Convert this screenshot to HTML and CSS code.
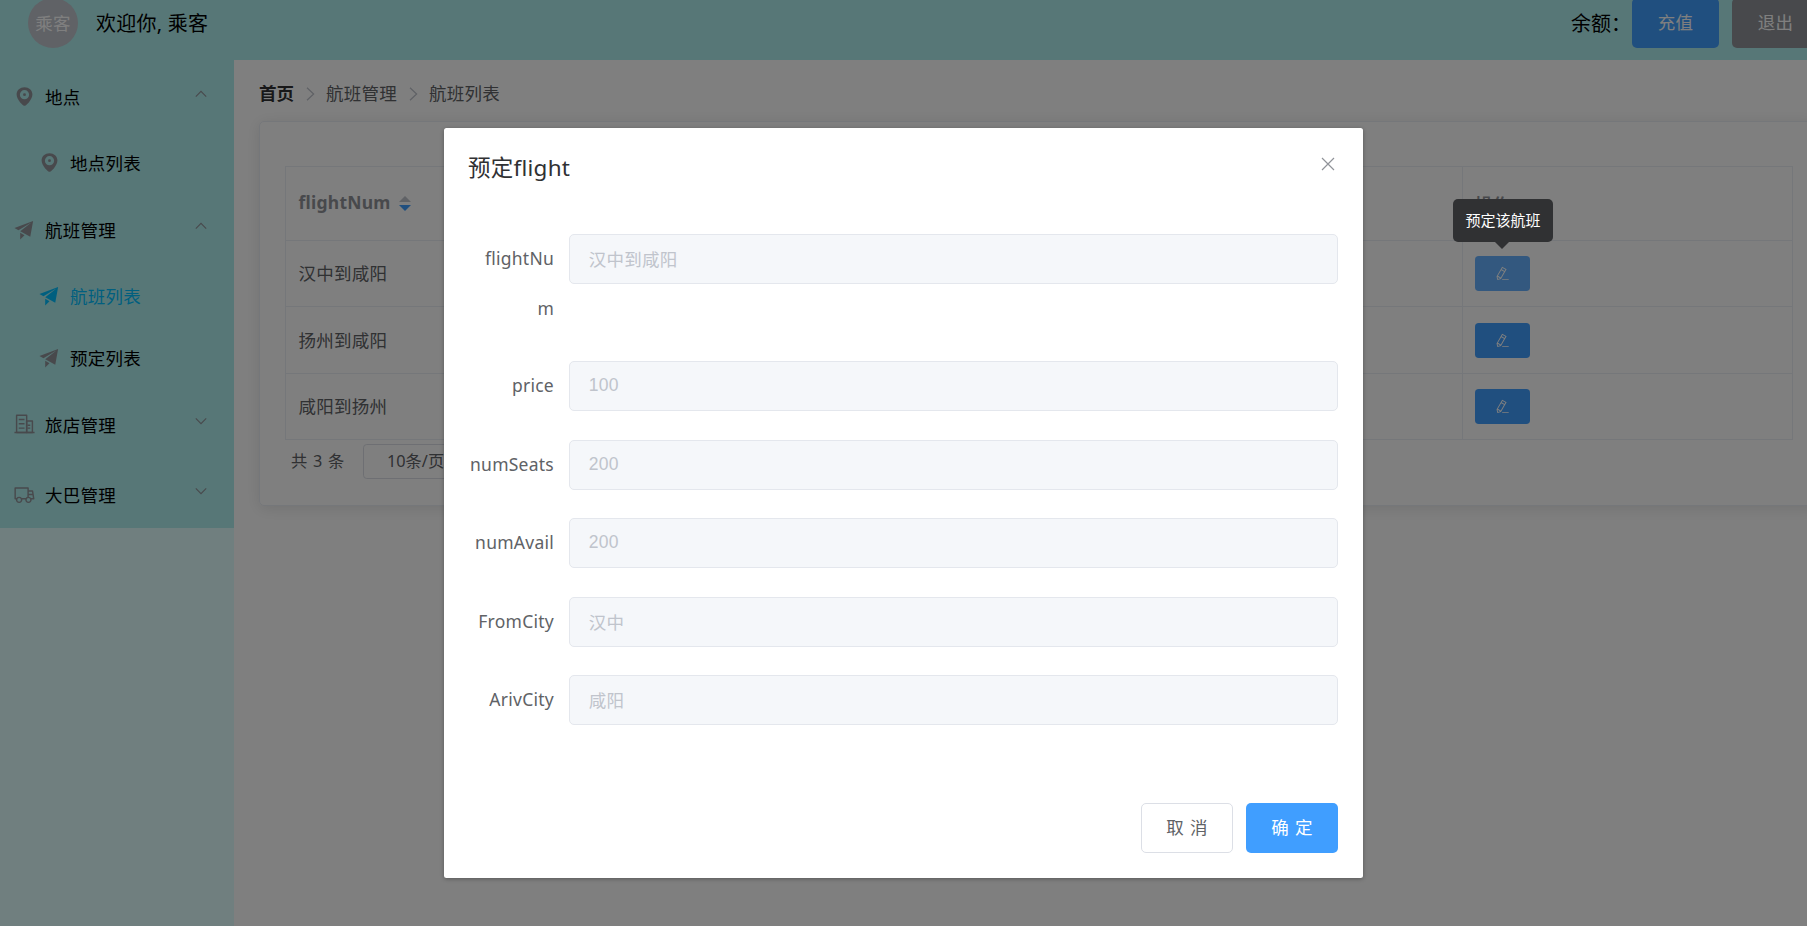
FILE: index.html
```html
<!DOCTYPE html>
<html lang="zh-CN">
<head>
<meta charset="utf-8">
<title>航班列表</title>
<link rel="stylesheet" href="styles.css">
</head>
<body>
<svg class="defs" aria-hidden="true">
  <symbol id="location" viewBox="0 0 1024 1024"><path d="M512 928c23.936 0 117.504-68.352 192.064-153.152C803.456 661.888 864 535.808 864 416c0-189.632-155.84-320-352-320S160 226.368 160 416c0 120.32 60.544 246.4 159.936 359.232C394.432 859.84 488 928 512 928zm0-435.2a64 64 0 1 0 0-128 64 64 0 0 0 0 128zm0 140.8a204.8 204.8 0 1 1 0-409.6 204.8 204.8 0 0 1 0 409.6z"/></symbol>
  <symbol id="promotion" viewBox="0 0 1024 1024"><path d="m64 448 832-320-128 704-446.08-243.328L832 192 242.816 545.536 64 448zm256 512V657.024L512 768 320 960z"/></symbol>
  <symbol id="building" viewBox="0 0 1024 1024"><path d="M192 128v704h384V128H192zm-32-64h448a32 32 0 0 1 32 32v768a32 32 0 0 1-32 32H160a32 32 0 0 1-32-32V96a32 32 0 0 1 32-32z"/><path d="M256 256h256v64H256v-64zm0 192h256v64H256v-64zm0 192h256v64H256v-64zm384-128h128v64H640v-64zm0 128h128v64H640v-64zM64 832h896v64H64v-64z"/><path d="M640 384v448h192V384H640zm-32-64h256a32 32 0 0 1 32 32v512a32 32 0 0 1-32 32H608a32 32 0 0 1-32-32V352a32 32 0 0 1 32-32z"/></symbol>
  <symbol id="truck" viewBox="0 0 1024 1024"><path d="M128.896 736H96a32 32 0 0 1-32-32V224a32 32 0 0 1 32-32h576a32 32 0 0 1 32 32v96h164.544a32 32 0 0 1 31.616 27.136l54.144 352A32 32 0 0 1 922.688 736h-91.52a144 144 0 1 1-286.272 0H415.104a144 144 0 1 1-286.272 0zm23.36-64a143.872 143.872 0 0 1 239.488 0H568.32c17.088-25.6 42.24-45.376 71.744-55.808V256H128v416h24.256zm655.488 0h77.632l-19.648-128H704v64.896A144 144 0 0 1 807.744 672zm48.128-192-14.72-96H704v96h151.872zM688 832a80 80 0 1 0 0-160 80 80 0 0 0 0 160zm-416 0a80 80 0 1 0 0-160 80 80 0 0 0 0 160z"/></symbol>
  <symbol id="edit" viewBox="0 0 1024 1024"><path d="m199.04 672.64 193.984 112 224-387.968-193.92-112-224 388.032zm-23.872 60.16 32.896 148.288 144.896-45.696L175.168 732.8zM455.04 229.248l193.92 112 56.704-98.112-193.984-112-56.64 98.112zM104.32 708.8l384-665.024 304.768 175.936L409.152 884.8h.064l-248.448 78.336L104.32 708.8zm384 254.272v-64h448v64h-448z"/></symbol>
  <symbol id="up" viewBox="0 0 12 12"><path d="M.8 8.6 6 3.4l5.2 5.2" fill="none" stroke="currentColor" stroke-width="1.1"/></symbol>
  <symbol id="down" viewBox="0 0 12 12"><path d="M.8 3.4 6 8.6l5.2-5.2" fill="none" stroke="currentColor" stroke-width="1.1"/></symbol>
  <symbol id="right" viewBox="0 0 9 14"><path d="M1 .8 7.6 7 1 13.2" fill="none" stroke="currentColor" stroke-width="1.3"/></symbol>
</svg>

<div class="app">
  <header class="header">
    <span class="avatar">乘客</span>
    <span class="welcome">欢迎你, 乘客</span>
    <span class="balance">余额：</span>
    <button class="btn btn-primary">充值</button>
    <button class="btn btn-info">退出</button>
  </header>
  <div class="body">
    <aside class="aside">
      <nav class="menu">
        <div class="item title"><svg class="ico"><use href="#location"/></svg><span>地点</span><svg class="arrow"><use href="#up"/></svg></div>
        <div class="item sub"><svg class="ico"><use href="#location"/></svg><span>地点列表</span></div>
        <div class="item title"><svg class="ico"><use href="#promotion"/></svg><span>航班管理</span><svg class="arrow"><use href="#up"/></svg></div>
        <div class="item sub active"><svg class="ico"><use href="#promotion"/></svg><span>航班列表</span></div>
        <div class="item sub"><svg class="ico"><use href="#promotion"/></svg><span>预定列表</span></div>
        <div class="item title"><svg class="ico"><use href="#building"/></svg><span>旅店管理</span><svg class="arrow"><use href="#down"/></svg></div>
        <div class="item title"><svg class="ico"><use href="#truck"/></svg><span>大巴管理</span><svg class="arrow"><use href="#down"/></svg></div>
      </nav>
    </aside>
    <main class="main">
      <div class="crumbs">
        <b>首页</b><svg class="sep"><use href="#right"/></svg><span>航班管理</span><svg class="sep"><use href="#right"/></svg><span>航班列表</span>
      </div>
      <section class="card">
        <div class="table">
          <div class="row head">
            <div class="cell">flightNum<span class="sort"><i class="asc"></i><i class="desc"></i></span></div>
            <div class="cell">操作</div>
          </div>
          <div class="row"><div class="cell">汉中到咸阳</div><div class="cell"><button class="edit hover"><svg><use href="#edit"/></svg></button></div></div>
          <div class="row"><div class="cell">扬州到咸阳</div><div class="cell"><button class="edit"><svg><use href="#edit"/></svg></button></div></div>
          <div class="row"><div class="cell">咸阳到扬州</div><div class="cell"><button class="edit"><svg><use href="#edit"/></svg></button></div></div>
        </div>
        <div class="pager"><span class="total">共 3 条</span><span class="size">10条/页</span></div>
      </section>
    </main>
  </div>
</div>

<div class="mask">
  <div class="dialog" role="dialog">
    <div class="dialog-head">
      <h2>预定flight</h2>
      <svg class="close" viewBox="0 0 14 14"><path d="M1 1l12 12M13 1L1 13"/></svg>
    </div>
    <form class="form">
      <div class="field tall"><label>flightNu<br>m</label><input disabled value="汉中到咸阳"></div>
      <div class="field"><label>price</label><input disabled value="100"></div>
      <div class="field"><label>numSeats</label><input disabled value="200"></div>
      <div class="field"><label>numAvail</label><input disabled value="200"></div>
      <div class="field"><label>FromCity</label><input disabled value="汉中"></div>
      <div class="field"><label>ArivCity</label><input disabled value="咸阳"></div>
    </form>
    <div class="dialog-foot">
      <button class="btn btn-plain">取 消</button>
      <button class="btn btn-primary">确 定</button>
    </div>
  </div>
</div>
<div class="tooltip">预定该航班</div>
</body>
</html>
```
FILE: styles.css
```css
* { box-sizing: border-box; }
body {
  margin: 0;
  height: 926px;
  overflow: hidden;
  background: #fff;
  color: #606266;
  font-family: "Noto Sans", "Noto Sans CJK SC", sans-serif;
  font-size: 17.5px;
  letter-spacing: .25px;
}
button, input { font: inherit; letter-spacing: inherit; }
.defs { position: absolute; width: 0; height: 0; }
.app { width: 1832px; height: 926px; overflow: hidden; }

.header {
  height: 60px;
  padding: 0 13px 14px 28px;
  display: flex;
  align-items: center;
  background: #afeeee;
  color: #000;
  font-size: 20px;
}
.avatar {
  width: 50px;
  height: 50px;
  flex: none;
  border-radius: 50%;
  background: #c0c4cc;
  color: #fff;
  font-size: 17.5px;
  line-height: 50px;
  text-align: center;
}
.welcome { margin-left: 18px; padding-top: 2px; line-height: 28px; }
.balance { margin-left: auto; width: 61px; padding-top: 2px; white-space: nowrap; line-height: 28px; letter-spacing: 0; }
.btn {
  height: 50px;
  padding: 0 0 3px;
  border: 1px solid transparent;
  border-radius: 5px;
  color: #fff;
  font-size: 17.5px;
  line-height: 44px;
}
.header .btn { width: 87px; flex: none; }
.header .btn + .btn { margin-left: 13px; }
.btn-primary { background: #409eff; }
.btn-info { background: #909399; }
.btn-plain { background: #fff; border-color: #dcdfe6; color: #606266; }

.body { display: flex; height: 866px; }
.aside { width: 233.75px; flex: none; background: #e0ffff; }
.menu { background: #afeeee; color: #000; }
.item { height: 62.5px; padding: 3px 27px 0 12.5px; display: flex; align-items: center; }
.title { height: 70px; }
.sub { padding-left: 37.5px; }
.ico { width: 23px; height: 23px; flex: none; fill: #909399; margin-right: 9.5px; }
.arrow { width: 12px; height: 12px; margin-left: auto; margin-bottom: 6px; color: #909399; }
.active { color: #00bfff; }
.active .ico { fill: #00bfff; }

.main { flex: 1; padding: 25px 14px 0 25.25px; }
.crumbs { height: 17.5px; display: flex; align-items: center; line-height: 17.5px; }
.crumbs b { color: #303133; letter-spacing: 0; }
.sep { width: 9px; height: 14px; margin: 0 11px 0 12px; color: #c0c4cc; }
.card {
  height: 385px;
  margin-top: 18.5px;
  padding: 44px 25px 0 25px;
  border: 1px solid #ebeef5;
  border-radius: 5px;
  box-shadow: 0 2.5px 15px rgba(0, 0, 0, .1);
}
.table { width: 1508px; border: 1px solid #ebeef5; border-bottom: 0; }
.row { display: grid; grid-template-columns: 1176px 1fr; height: 66.4px; border-bottom: 1px solid #ebeef5; }
.head { height: 74px; font-weight: 700; color: #909399; }
.cell { padding: 0 0 2px 12.5px; display: flex; align-items: center; }
.head .cell { padding-bottom: 3px; }
.cell + .cell { padding-left: 12px; padding-bottom: 0; border-left: 1px solid #ebeef5; }
.sort { display: grid; gap: 3px; margin: 2px 0 0 8px; }
.asc, .desc { border: 6px solid transparent; width: 0; height: 0; }
.asc { border-top: 0; border-bottom-color: #c0c4cc; }
.desc { border-bottom: 0; border-top-color: #409eff; }
.edit {
  width: 55px;
  height: 35px;
  padding: 0;
  border: 0;
  border-radius: 3.75px;
  background: #409eff;
  display: grid;
  place-items: center;
}
.edit svg { width: 15px; height: 15px; fill: #fff; }
.hover { background: #66b1ff; }
.pager { display: flex; align-items: center; margin-top: 4px; padding-left: 6px; font-size: 16.25px; }
.total { padding-bottom: 3px; word-spacing: 1px; }
.size {
  width: 137px;
  height: 35px;
  margin-left: 18px;
  padding-left: 23.5px;
  border: 1px solid #dcdfe6;
  border-radius: 3.75px;
  line-height: 32px;
  letter-spacing: 0;
}

/* Modal layer */
.mask { position: absolute; inset: 0; padding-top: 128px; background: rgba(0, 0, 0, .5); }
.dialog {
  width: 919px;
  height: 750px;
  margin: 0 auto;
  padding: 0 25px 25px;
  display: flex;
  flex-direction: column;
  border-radius: 2.5px;
  background: #fff;
  box-shadow: 0 1px 4px rgba(0, 0, 0, .3);
}
.dialog-head { height: 106px; padding-top: 25px; display: flex; justify-content: space-between; }
.dialog-head h2 { margin: -1px 0 0 -1px; color: #303133; font-size: 22.5px; font-weight: 400; line-height: 32px; }
.close { width: 14px; height: 14px; margin: 3.5px 3px 0 0; fill: none; stroke: #909399; stroke-width: 1.2; }
.field { display: flex; height: 50px; margin-bottom: 28.4px; }
.tall { height: 99px; }
.field label {
  width: 100px;
  flex: none;
  margin-top: -1px;
  padding-right: 15px;
  line-height: 50px;
  text-align: right;
}
.field input {
  flex: 1;
  height: 50px;
  padding: 0 18.75px 1px;
  border: 1px solid #e4e7ed;
  border-radius: 5px;
  background: #f5f7fa;
  color: #c0c4cc;
  font-family: "Liberation Sans", "Noto Sans CJK SC", sans-serif;
}
.dialog-foot { margin-top: auto; display: flex; justify-content: flex-end; gap: 13px; }
.dialog-foot .btn { width: 92px; word-spacing: 1px; }

.tooltip {
  position: absolute;
  left: 1453px;
  top: 199px;
  width: 100px;
  height: 43px;
  border-radius: 5px;
  background: #303133;
  color: #fff;
  font-size: 15px;
  line-height: 42px;
  letter-spacing: 0;
  text-align: center;
}
.tooltip::after {
  content: "";
  position: absolute;
  left: 42px;
  top: 43px;
  border: 7px solid transparent;
  border-bottom: 0;
  border-top-color: #303133;
}
```
